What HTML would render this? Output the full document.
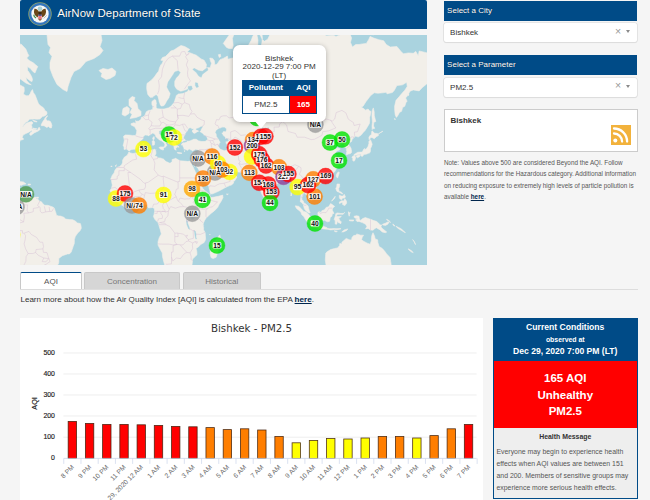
<!DOCTYPE html>
<html lang="en">
<head>
<meta charset="utf-8">
<title>AirNow Department of State</title>
<style>
*{box-sizing:border-box}
html,body{margin:0;padding:0}
body{width:650px;height:500px;overflow:hidden;background:#f5f5f5;font-family:"Liberation Sans",Arial,sans-serif;color:#333;position:relative}
.abs{position:absolute}
.blue{background:#004b87;color:#fff}
#hdr{left:20px;top:0;width:406.5px;height:28.5px;border-radius:2px 2px 0 0}
#hdr .t{left:37.3px;top:0;line-height:27.5px;font-size:11.5px;white-space:nowrap;text-shadow:0 0 1px rgba(0,0,0,.6)}
#map{left:20px;top:34.5px;width:406.5px;height:230px;background:#aad3df;overflow:hidden}
.bar{left:444.1px;width:193.2px;height:20px;font-size:8px;line-height:20.5px;padding-left:3px;text-shadow:0 0 1px rgba(0,0,0,.6)}
.sel{left:444.1px;width:193.2px;height:19.2px;background:#fff;border-radius:2px;box-shadow:0 0 0 0.6px #d8d8d8, 0 1px 1px rgba(0,0,0,.08);font-size:8px;line-height:19.5px;padding-left:6px;color:#333}
.sel .x{right:16.2px;top:-1.2px;color:#999;font-size:10.5px}
.sel .c{right:7.1px;top:7.5px;width:0;height:0;border-left:2.8px solid transparent;border-right:2.8px solid transparent;border-top:3px solid #8a8a8a}
#rss{left:444px;top:109px;width:193.5px;height:42.6px;background:#fff;border:1px solid #ccc}
#rss b{left:5.5px;top:5.5px;font-size:8px;color:#333}
#note{left:444px;top:157px;width:200px;font-size:6.33px;line-height:11.4px;color:#555;white-space:nowrap}
#note a,#learn a{color:#00264d;font-weight:700;text-decoration:underline}
.tab{top:271.5px;height:17.5px;background:#d6d6d6;border:1px solid #c8c8c8;border-bottom:none;border-radius:2px 2px 0 0;font-size:8.05px;line-height:17px;text-align:center;color:#777}
#tabline{left:20px;top:288.5px;width:618px;height:1px;background:#ddd}
#learn{left:20.4px;top:294.4px;font-size:8.08px;line-height:12px;white-space:nowrap;color:#333}
#chart{left:20px;top:318px;width:463px;height:182px;background:#fff}
#cc{left:492.5px;top:318px;width:145.5px;height:180.5px;border:1px solid #004b87;background:#eee}
#cc .c{left:0;width:100%;text-align:center;white-space:nowrap;font-weight:700}
</style>
</head>
<body>
<div id="hdr" class="abs blue">
<svg class="abs" style="left:8.25px;top:2.3px" width="24" height="24" viewBox="-12 -12 24 24">
<circle r="11.7" fill="#93a56a"/><circle r="10.9" fill="#3476bd"/><circle r="8.7" fill="#f8f8f6"/>
<circle cx="0" cy="-5.2" r="2.3" fill="#a9d2d6"/>
<path d="M-.6 -1.2 Q-2.6 -5.6 -5.6 -5.2 Q-6.6 -2 -5.4 .6 Q-4.2 2.6 -2.2 3.4 L-1.8 .8 Z M.6 -1.2 Q2.6 -5.6 5.6 -5.2 Q6.6 -2 5.4 .6 Q4.2 2.6 2.2 3.4 L1.8 .8 Z" fill="#6a4717"/>
<path d="M-1.4 -2.2 Q0 -3.4 1.4 -2.2 L1.8 1 L-1.8 1 Z" fill="#3b2a14"/>
<path d="M-2.4 4.4 L0 7 L2.4 4.4 Z" fill="#7a5a2a"/>
<path d="M-1.7 .7h3.4v3q0 1.4-1.7 1.8q-1.7-.4-1.7-1.8z" fill="#e8747c"/><rect x="-1.7" y=".7" width="3.4" height="1.1" fill="#2b4f95"/>
<path d="M-6.9 .8 Q-6.6 3.6 -4.2 4.6 L-3.6 3.4 Q-5.4 2.8 -5.6 .8 Z" fill="#3f8f4a"/>
<path d="M3.8 4.4 L6.6 1.4" stroke="#a9a9a9" stroke-width=".8" fill="none"/>
</svg>
<div class="t abs">AirNow Department of State</div>
</div>
<div id="map" class="abs">
<svg class="abs" style="left:0;top:0" width="406.5" height="230" viewBox="0 0 406.5 230">
<defs><filter id="sb" x="-2%" y="-2%" width="104%" height="104%"><feGaussianBlur stdDeviation="0.45"/></filter></defs>
<g filter="url(#sb)">
<rect x="-5" y="-5" width="420" height="240" fill="#aad3df"/>
<g stroke="#f2efe9" stroke-width="0.6" stroke-linejoin="round">
<polygon points="27.0,-0.5 28.0,9.5 30.5,12.5 29.0,17.5 32.0,21.5 30.0,27.5 30.0,33.5 33.0,41.5 37.0,49.5 43.0,54.5 47.0,56.5 48.0,51.5 51.0,42.5 54.0,36.5 60.0,33.5 66.0,26.5 74.0,23.5 80.0,19.5 83.0,15.5 80.0,11.5 82.0,5.5 81.0,-0.5" fill="#f2efe9"/>
<polygon points="79.0,35.5 83.0,33.5 88.0,34.5 92.0,33.0 96.0,36.5 95.0,40.5 90.0,43.5 86.0,44.5 81.0,41.5 82.0,38.5" fill="#f2efe9"/>
<polygon points="112.0,61.5 115.0,62.5 114.0,65.5 117.0,68.5 118.0,73.5 121.0,76.5 121.0,80.5 116.0,82.5 110.0,83.5 112.0,79.5 110.0,77.5 112.0,73.5 109.0,70.5 109.0,64.5" fill="#f2efe9"/>
<polygon points="103.0,73.5 107.0,71.5 109.4,73.5 109.0,78.5 105.0,81.1 102.0,79.5" fill="#f2efe9"/>
<polygon points="130.1,62.3 127.8,59.4 126.8,54.6 126.7,52.2 127.0,48.4 128.6,47.3 131.3,45.2 133.4,43.0 135.0,41.1 136.7,38.4 138.7,36.1 139.3,33.2 140.8,29.9 142.3,28.2 143.3,25.6 140.8,25.2 142.5,22.5 145.4,21.6 148.2,18.8 150.7,16.0 154.0,15.0 157.6,12.5 161.0,10.5 164.7,11.5 169.8,14.5 167.1,16.9 170.4,17.9 173.7,19.3 176.3,20.2 181.1,23.9 184.1,25.2 186.5,29.5 186.0,32.4 190.2,32.8 191.5,28.2 190.3,25.6 189.8,23.0 192.6,23.4 194.3,25.6 194.8,29.9 197.2,29.1 198.5,26.9 200.0,24.7 203.3,23.4 207.4,21.1 207.9,24.3 212.4,23.0 215.7,23.0 218.1,19.7 218.3,16.9 220.6,17.9 224.7,19.7 228.0,22.0 229.6,24.3 231.8,22.5 229.3,18.8 228.5,14.0 228.8,9.5 231.3,5.3 232.6,1.4 234.2,-0.9 237.5,-0.9 238.4,5.3 239.2,-0.9 242.0,-0.9 242.6,4.7 244.4,6.3 247.7,4.2 250.2,-0.9 304.5,-0.9 306.1,0.9 313.5,0.3 316.0,1.4 320.9,-0.3 323.4,-0.9 330.0,-0.9 331.6,3.1 330.5,7.4 332.4,12.0 335.7,9.5 339.0,9.5 342.3,8.9 346.4,8.4 348.9,4.2 350.1,1.4 353.8,3.1 358.8,4.7 363.7,5.8 366.2,9.5 370.3,12.0 376.9,11.5 381.0,16.4 383.4,18.8 388.4,17.9 393.3,18.3 395.8,16.4 398.2,20.7 399.2,16.0 403.2,16.9 407.3,17.9 407.3,48.4 402.4,52.5 399.1,55.9 393.3,54.9 390.0,56.2 387.6,60.7 385.6,62.9 387.1,66.2 385.9,67.7 384.8,71.2 382.6,72.4 381.6,76.3 379.5,77.4 377.7,80.8 376.4,82.4 375.2,80.0 374.7,75.4 374.6,71.2 376.0,65.3 379.3,61.6 381.8,58.5 384.8,55.2 387.2,51.5 386.7,47.3 382.6,49.8 381.0,50.1 376.9,50.5 374.4,55.2 372.4,57.5 367.0,58.8 366.2,57.2 362.9,57.8 357.9,58.2 354.2,57.8 350.5,60.7 345.9,66.8 343.1,71.2 341.2,72.1 344.3,74.0 345.3,75.2 348.1,74.0 349.4,75.7 351.0,76.5 350.5,79.5 349.7,82.2 349.7,86.0 349.4,88.5 346.9,92.7 345.1,95.5 342.8,97.9 341.2,100.1 338.2,102.0 335.7,101.1 334.1,102.4 333.1,103.3 332.1,104.6 331.6,106.4 329.0,108.1 328.2,109.6 329.7,111.1 331.0,113.2 331.6,116.2 331.3,117.9 329.8,118.7 328.3,119.1 326.5,119.7 326.4,118.1 326.9,116.2 326.2,114.8 327.0,113.4 325.5,112.7 324.1,111.9 324.6,110.4 324.2,109.2 323.1,108.3 320.9,109.0 318.8,110.4 318.1,109.2 319.6,107.0 318.0,106.2 315.3,108.3 312.7,109.8 312.4,111.1 314.2,112.7 314.4,114.0 316.0,113.6 317.5,112.7 320.1,113.8 319.8,114.8 316.8,116.0 314.8,118.5 316.3,120.1 317.5,122.8 319.1,124.8 319.1,126.5 317.6,127.3 319.3,128.4 318.6,130.5 317.3,132.2 315.7,135.1 314.4,137.1 313.0,138.4 310.9,140.2 308.6,141.6 306.5,142.4 305.3,142.7 302.8,143.4 300.5,144.1 300.4,145.7 299.4,145.7 299.1,143.9 297.1,143.4 295.6,144.1 294.1,145.4 292.8,146.8 292.5,148.7 293.8,150.6 295.6,152.3 296.8,153.2 297.9,155.4 298.4,157.9 298.4,160.3 297.1,161.6 294.9,162.8 294.1,164.0 292.1,165.1 291.0,165.8 291.2,163.8 290.5,162.8 288.9,162.5 288.0,161.0 286.9,159.8 285.2,158.9 284.6,157.8 283.6,157.6 283.1,158.8 282.8,160.5 281.8,162.6 281.9,164.6 283.3,166.0 283.9,168.0 285.6,168.8 286.9,169.8 288.2,171.3 288.7,173.7 289.4,175.9 290.2,177.7 288.9,177.9 286.7,176.4 285.2,175.1 284.1,173.1 283.6,170.8 283.1,169.3 281.9,167.8 280.3,166.8 280.6,163.8 281.0,160.6 280.1,156.7 279.2,152.5 277.8,151.6 276.8,152.6 275.5,153.7 273.7,153.3 273.9,150.8 272.7,147.6 271.3,146.1 269.9,143.9 269.4,142.2 267.6,142.2 265.8,143.2 263.7,143.2 261.7,143.9 261.4,145.7 259.7,146.8 258.3,147.8 255.8,150.4 254.0,152.0 252.2,153.3 250.5,154.7 250.4,157.1 250.7,158.4 250.0,160.5 250.0,163.0 248.6,164.3 247.2,165.3 246.1,166.6 245.1,166.0 243.9,163.5 243.1,161.1 241.6,158.6 240.8,155.9 239.8,153.7 239.0,151.3 238.4,148.2 238.2,145.5 238.0,143.4 237.4,144.7 235.4,145.2 233.8,144.7 232.1,142.5 233.8,141.3 231.3,140.6 229.6,139.5 228.8,137.9 228.0,136.8 224.9,137.1 221.1,137.3 218.3,137.0 215.3,136.6 212.9,136.0 212.0,133.8 211.2,135.1 211.4,137.5 212.4,139.3 215.0,140.0 217.0,142.0 215.7,144.1 214.8,145.7 213.7,146.1 213.5,148.2 211.5,149.9 209.6,150.6 207.4,151.6 204.5,153.0 199.5,155.7 196.7,157.1 192.6,158.8 190.2,158.9 189.7,160.5 191.0,162.6 194.3,162.1 198.4,161.3 202.7,160.1 203.0,162.6 201.3,166.0 199.2,169.3 197.6,172.6 194.3,175.9 191.0,178.4 188.5,180.8 186.0,183.3 184.7,185.3 183.7,187.4 182.8,189.9 183.6,192.4 183.6,194.9 185.1,197.5 185.4,200.7 185.6,204.6 184.1,207.5 180.3,209.8 178.6,211.8 176.0,213.4 176.8,216.2 177.0,219.8 174.5,222.1 172.6,224.1 172.4,227.1 171.9,230.4 144.9,230.4 143.6,226.2 142.5,221.6 142.3,218.0 140.3,214.5 138.0,210.1 138.0,206.7 139.3,202.4 141.3,199.0 140.3,194.9 138.8,190.1 138.0,187.6 135.0,184.6 133.4,181.6 134.1,179.2 134.7,176.2 134.4,173.7 132.7,172.4 130.4,172.8 128.5,172.9 126.8,170.4 125.5,169.6 122.7,169.5 120.6,169.9 118.6,170.8 115.3,172.1 112.8,171.6 110.4,171.4 106.3,172.8 103.8,171.4 100.8,169.5 98.0,167.6 96.7,166.0 96.7,164.3 94.4,162.1 93.1,160.8 91.1,159.4 91.0,157.6 90.0,155.5 91.5,153.3 92.3,149.9 91.8,147.8 91.5,145.0 90.6,144.3 92.3,140.2 94.1,137.9 94.9,135.3 96.9,132.5 99.7,131.4 101.8,129.6 102.6,127.3 102.6,125.2 104.5,122.0 107.1,120.5 108.2,118.5 108.9,116.9 109.4,116.4 108.2,115.2 106.4,114.0 104.0,114.4 104.1,111.7 103.0,110.7 103.8,108.1 104.3,105.3 103.5,101.3 105.4,99.9 109.1,100.1 112.3,100.4 115.6,100.6 116.5,98.1 116.8,95.5 115.6,93.6 114.7,91.7 111.4,90.2 110.9,88.8 113.7,87.8 116.0,88.3 115.6,85.5 116.6,86.3 118.8,86.0 121.1,84.2 121.2,82.4 122.7,81.9 124.4,81.1 125.2,79.5 126.3,76.8 128.5,75.4 130.4,75.2 132.7,74.3 132.9,71.5 131.9,69.5 131.9,66.5 134.2,64.7 136.0,63.2 133.4,62.3" fill="#f2efe9"/>
<polygon points="199.7,199.9 201.3,205.5 200.5,208.0 199.9,210.5 198.1,216.2 196.1,222.3 193.1,223.6 191.0,222.5 190.0,218.0 191.6,213.6 191.0,209.2 192.6,206.7 195.6,205.6 197.6,202.9" fill="#f2efe9"/>
<polygon points="250.0,164.0 251.5,165.1 253.2,167.6 253.0,169.5 251.2,170.3 250.2,169.6 249.7,166.8" fill="#f2efe9"/>
<polygon points="297.4,147.8 299.5,146.2 301.2,147.1 300.2,149.0 298.2,149.5" fill="#f2efe9"/>
<polygon points="318.5,137.0 319.3,137.5 318.5,140.2 317.5,143.1 316.3,141.5 316.3,139.7 317.6,137.5" fill="#f2efe9"/>
<polygon points="353.3,72.9 354.2,76.8 354.3,80.8 355.8,86.5 353.8,87.3 353.5,91.0 354.7,93.2 353.8,94.1 352.8,92.7 352.2,94.6 352.0,91.0 352.4,87.3 351.9,80.8 352.2,75.7" fill="#f2efe9"/>
<polygon points="352.0,95.8 354.7,98.3 357.6,98.5 358.4,100.6 356.3,101.7 354.3,103.7 351.9,102.4 350.5,102.8 349.2,104.8 348.9,102.6 349.7,100.8 351.5,99.5 351.7,96.9" fill="#f2efe9"/>
<polygon points="350.5,104.8 351.4,107.0 352.2,109.2 351.4,111.7 350.5,113.4 350.4,116.4 350.2,117.1 348.9,118.5 348.4,117.9 347.4,118.7 345.9,119.3 344.0,119.3 343.6,119.9 342.3,121.5 340.8,120.7 340.8,119.3 339.0,119.3 336.6,120.1 334.1,120.5 333.9,119.7 335.7,118.5 337.7,117.3 340.7,117.1 342.3,117.1 343.6,114.4 344.5,113.4 344.5,114.8 346.4,113.8 348.1,111.3 348.9,108.5 348.9,106.4 349.6,105.5" fill="#f2efe9"/>
<polygon points="336.6,120.7 339.4,119.7 340.2,120.9 339.4,121.8 337.4,122.8 336.4,122.0" fill="#f2efe9"/>
<polygon points="333.9,120.7 335.2,121.3 335.6,122.8 334.8,125.5 333.6,126.3 332.8,125.5 332.8,123.4 332.0,122.4 332.4,121.5" fill="#f2efe9"/>
<polygon points="317.0,149.0 319.6,149.0 319.6,151.6 318.6,153.5 319.0,156.4 320.9,156.9 322.7,158.4 322.4,159.1 320.3,157.9 318.6,157.1 317.0,156.4 316.5,155.4 315.8,153.2 316.7,152.0" fill="#f2efe9"/>
<polygon points="319.3,160.3 321.3,161.0 323.2,161.1 324.2,159.3 325.4,161.5 324.7,163.1 322.6,163.1 321.6,164.8 319.9,163.8 319.3,162.5" fill="#f2efe9"/>
<polygon points="324.9,163.8 326.4,166.0 326.7,168.1 324.9,170.6 322.6,169.6 322.7,167.8 321.4,167.6 319.5,168.6 319.3,167.1 321.8,165.8 323.7,166.0" fill="#f2efe9"/>
<polygon points="311.6,166.1 315.2,161.3 314.8,163.1 312.2,165.8" fill="#f2efe9"/>
<polygon points="275.4,170.8 279.0,171.4 281.0,173.6 283.8,176.4 285.9,177.0 288.7,179.2 290.3,181.6 291.2,183.8 293.1,184.9 292.6,189.6 290.7,189.6 288.0,187.4 286.1,185.6 283.8,181.6 281.6,179.5 281.0,177.2 279.0,175.4 276.5,173.4 275.4,171.4" fill="#f2efe9"/>
<polygon points="291.7,191.2 293.0,189.7 297.1,190.9 300.4,191.4 301.2,190.5 303.8,191.4 307.0,192.7 306.8,194.2 303.7,193.9 299.5,193.2 296.3,192.9 293.6,192.2" fill="#f2efe9"/>
<polygon points="307.1,193.4 309.4,193.7 311.1,193.7 314.4,193.5 316.0,193.7 320.6,193.5 320.9,194.0 316.8,194.7 314.4,194.5 310.7,194.9 308.8,194.5 307.1,194.2" fill="#f2efe9"/>
<polygon points="321.8,197.0 324.2,194.9 327.8,193.9 326.7,195.4 323.4,196.9" fill="#f2efe9"/>
<polygon points="314.4,195.7 317.3,196.4 316.0,197.0 314.4,196.2" fill="#f2efe9"/>
<polygon points="297.9,177.5 299.1,176.7 301.2,177.4 301.9,175.7 304.5,174.7 306.1,172.4 308.6,171.8 310.6,168.6 312.2,169.5 314.7,171.4 312.7,172.9 312.2,175.1 314.0,178.4 312.4,178.7 311.9,181.3 310.2,182.6 309.9,184.9 309.4,186.4 307.3,186.8 304.5,185.3 302.5,185.6 299.9,184.8 299.5,182.5 298.2,180.8 297.9,179.2" fill="#f2efe9"/>
<polygon points="315.7,178.7 317.3,177.9 320.8,178.5 323.4,178.4 324.6,177.4 323.1,179.3 320.9,179.2 317.5,179.3 316.2,181.3 318.5,181.5 321.4,181.3 319.8,182.8 318.5,183.1 319.8,185.4 321.3,186.9 320.6,188.9 319.6,187.9 318.6,187.9 317.5,185.8 316.7,189.2 315.2,189.1 315.2,185.8 314.2,184.4 315.2,181.5 315.7,180.0" fill="#f2efe9"/>
<polygon points="328.5,176.7 329.2,178.0 330.3,177.5 329.5,179.3 329.2,181.2 328.5,178.7" fill="#f2efe9"/>
<polygon points="329.2,184.9 333.8,184.9 333.3,186.1 329.5,185.8" fill="#f2efe9"/>
<polygon points="334.1,181.3 336.6,180.7 339.0,181.3 339.4,184.1 340.7,185.4 342.3,183.8 345.3,182.5 348.1,183.5 350.5,184.3 353.8,185.6 356.3,186.3 358.4,187.9 360.1,189.9 361.7,189.9 360.9,191.9 362.9,194.0 365.4,195.9 366.7,197.0 365.4,197.7 362.1,196.9 360.1,194.9 356.3,192.7 354.7,193.7 353.0,195.2 350.5,195.0 348.1,193.4 345.6,193.9 346.9,191.5 345.6,189.2 342.3,187.6 339.0,186.4 337.1,186.6 335.7,184.8 338.2,183.8 335.7,183.3 334.1,182.3" fill="#f2efe9"/>
<polygon points="362.6,189.2 365.4,188.2 367.8,186.9 369.1,187.1 367.8,189.2 365.4,190.4 362.7,189.9" fill="#f2efe9"/>
<polygon points="366.7,184.3 369.5,185.9 370.4,187.7 369.5,186.6 366.7,184.8" fill="#f2efe9"/>
<polygon points="372.9,188.9 375.1,191.0 373.9,190.9 372.8,189.2" fill="#f2efe9"/>
<polygon points="376.0,191.2 381.5,193.9 383.4,196.0 385.4,197.5 384.3,197.2 381.5,195.4 377.7,193.2" fill="#f2efe9"/>
<polygon points="392.7,204.6 393.8,206.0 395.5,209.6 394.6,207.2" fill="#f2efe9"/>
<polygon points="388.4,213.8 390.8,215.3 393.3,217.6 391.7,217.1 388.9,215.0" fill="#f2efe9"/>
<polygon points="306.1,230.4 305.3,225.2 305.5,221.6 305.8,218.0 307.1,216.8 310.6,214.6 314.4,213.6 317.6,212.9 319.6,210.5 319.8,208.4 321.9,209.1 321.9,207.2 324.2,205.3 326.2,203.4 328.8,204.5 330.0,205.0 331.6,204.8 332.0,202.4 333.6,200.6 336.6,200.1 336.7,198.9 340.7,200.2 343.6,200.2 342.3,202.1 341.5,204.8 344.0,206.5 347.3,208.2 350.1,209.2 351.4,205.8 351.5,202.4 351.9,200.2 353.0,197.7 354.5,201.1 355.2,203.9 357.6,204.8 357.9,207.5 359.1,211.5 361.7,213.1 364.0,215.3 366.7,218.9 370.0,222.5 370.6,226.2 371.1,228.9 371.1,230.4" fill="#f2efe9"/>
<polygon points="206.4,159.1 208.3,159.1 207.4,159.6" fill="#f2efe9"/>
<polygon points="271.1,157.6 271.6,160.1 270.9,161.0" fill="#f2efe9"/>
<polygon points="203.3,8.4 206.6,3.6 209.9,-0.9 214.0,-0.9 212.4,3.6 213.2,10.5 212.4,13.5 209.1,13.5 206.6,12.5 205.0,10.5" fill="#f2efe9"/>
<polygon points="198.4,19.7 200.4,19.3 200.8,21.6 199.2,22.5" fill="#f2efe9"/>
<polygon points="215.7,15.0 217.8,15.0 217.0,17.9" fill="#f2efe9"/>
<polygon points="233.8,-0.9 236.2,-0.9 235.7,0.9 234.1,0.9" fill="#f2efe9"/>
<polygon points="344.0,-0.9 354.7,-0.9 353.8,-0.3" fill="#f2efe9"/>
<polygon points="374.4,83.5 375.5,84.0 374.9,84.7" fill="#f2efe9"/>
<polygon points="357.9,99.5 359.3,98.3 362.9,96.2 360.4,97.6" fill="#f2efe9"/>
<polygon points="387.6,59.1 388.9,59.1 388.4,60.7" fill="#f2efe9"/>
<polygon points="90.8,131.2 92.1,131.1 91.5,132.0" fill="#f2efe9"/>
<polygon points="95.2,130.9 96.4,129.7 95.7,131.6" fill="#f2efe9"/>
<polygon points="183.1,189.6 183.6,190.2 183.2,190.5" fill="#f2efe9"/>
<polygon points="189.8,199.0 190.2,199.7 189.7,199.7" fill="#f2efe9"/>
<polygon points="-0.8,160.1 1.3,159.4 1.3,161.3 3.1,159.9 3.8,161.1 6.2,162.0 6.7,162.6 10.0,162.5 12.5,163.1 15.0,162.3 16.8,162.3 15.8,163.5 18.3,164.6 19.1,166.0 21.5,166.8 22.9,168.8 24.8,170.3 27.8,170.3 32.6,171.9 34.2,172.9 35.5,176.7 36.3,179.2 36.3,180.3 38.8,181.0 40.5,181.0 43.8,182.3 45.7,184.1 49.5,184.6 52.8,184.8 55.3,186.1 57.4,187.9 60.4,188.6 61.0,190.7 61.3,193.3 59.9,196.0 57.7,198.0 55.3,201.6 54.4,204.6 54.3,208.4 53.3,211.0 52.3,214.1 51.2,217.1 49.5,218.9 47.5,218.9 42.4,220.7 38.8,223.4 38.8,227.3 38.3,229.1 37.2,230.4 -0.8,230.4" fill="#f2efe9"/>
<polygon points="-0.8,146.6 3.4,146.9 6.1,148.9 3.4,149.4 1.0,150.4 -0.8,149.5" fill="#f2efe9"/>
<polygon points="8.1,149.0 10.7,149.2 10.2,150.0 8.1,149.9" fill="#f2efe9"/>
<polygon points="16.8,162.3 18.4,162.1 18.3,163.3 16.8,163.3" fill="#f2efe9"/>
<polygon points="-0.8,10.0 1.0,8.9 5.8,14.0 7.6,18.3 8.9,20.7 6.7,23.0 9.2,25.6 13.3,27.8 15.8,29.9 17.8,31.6 16.6,34.0 15.0,38.0 12.8,36.4 10.4,33.6 7.4,31.6 7.6,35.3 10.0,38.8 11.7,41.8 12.5,44.4 12.0,46.6 10.4,45.9 8.4,44.4 5.8,42.6 6.7,45.5 9.2,48.4 11.3,49.8 9.2,49.4 5.9,48.0 3.8,46.6 1.0,44.4 -0.8,43.3" fill="#f2efe9"/>
<polygon points="-0.8,49.4 1.0,50.5 4.1,52.2 4.3,55.9 3.4,59.1 4.6,59.8 6.1,60.7 8.4,60.7 10.0,59.1 11.2,56.2 12.5,54.6 13.3,57.5 15.0,59.8 16.1,62.6 17.4,65.9 18.3,68.3 19.6,70.1 21.2,71.2 23.2,72.6 24.3,74.0 24.8,75.4 26.8,76.8 27.0,79.0 25.2,80.8 22.4,81.6 19.9,84.0 16.9,84.2 14.1,84.0 9.4,84.2 7.6,86.5 5.9,87.3 3.9,89.5 2.3,92.2 1.5,92.7 3.0,91.7 4.3,90.0 5.9,88.5 8.4,87.3 11.7,86.6 13.0,87.8 12.0,89.5 10.0,89.5 11.7,90.5 12.0,92.0 11.7,93.4 13.3,94.3 15.0,95.1 16.8,94.8 18.3,96.0 14.1,97.9 12.5,99.2 10.9,100.4 9.7,99.5 10.0,98.1 12.0,96.5 11.8,95.3 10.0,96.5 8.4,97.4 5.9,98.5 3.1,100.1 2.1,102.6 3.4,103.6 3.4,104.4 1.1,105.1 -0.8,105.5" fill="#f2efe9"/>
<polygon points="17.4,95.5 18.3,93.2 19.2,92.2 20.2,94.3 19.1,95.5" fill="#f2efe9"/>
<polygon points="12.7,92.9 15.0,93.6 16.6,93.5 15.6,94.6 13.6,94.1" fill="#f2efe9"/>
<polygon points="12.5,85.0 16.6,86.3 17.1,87.0 14.1,86.5" fill="#f2efe9"/>
<polygon points="27.3,80.6 25.2,82.7 24.2,84.7 23.2,86.0 21.9,88.3 21.1,90.0 21.4,90.7 24.0,90.7 26.8,92.4 28.5,91.5 29.8,92.7 31.3,93.0 31.9,90.7 31.4,88.5 30.4,86.5 28.9,85.8 27.3,86.0 26.5,84.7 25.7,84.0 26.6,82.4 27.5,81.1" fill="#f2efe9"/>
<polygon points="-0.8,106.2 0.2,105.7 0.2,106.3 -0.8,106.6" fill="#f2efe9"/>
</g>
<g stroke="#aad3df" stroke-width="0.4" stroke-linejoin="round">
<polygon points="141.0,71.7 144.0,71.1 145.8,68.7 147.0,66.3 149.4,62.7 150.6,58.5 148.8,55.5 147.0,51.9 148.2,47.1 150.6,43.5 153.0,39.9 154.8,36.9 158.4,35.7 160.2,37.5 158.4,40.5 156.0,42.9 154.2,46.5 154.2,50.7 155.4,53.1 157.2,54.9 160.8,56.7 165.0,55.5 168.0,54.3 167.4,56.1 163.2,57.9 158.4,58.5 156.0,60.3 154.8,63.9 153.6,67.5 151.2,70.5 148.8,72.3 144.0,73.5 140.4,73.5 136.8,73.1 136.6,69.5 138.0,68.5" fill="#aad3df"/>
<polygon points="132.8,62.3 136.2,59.9 137.6,61.5 138.6,66.3 139.8,69.9 141.2,71.9 139.0,72.5 137.0,69.0 136.4,65.5 135.0,64.1" fill="#aad3df"/>
<polygon points="187.2,32.7 182.4,36.3 178.8,35.7 174.0,33.3 172.8,34.5 176.4,37.5 178.8,41.1 181.2,42.3 182.4,39.3 185.4,36.9 188.0,35.1" fill="#aad3df"/>
<polygon points="168.2,51.5 171.5,51.0 172.4,54.0 170.0,55.5 168.2,54.0" fill="#aad3df"/>
<polygon points="175.4,47.7 177.5,48.0 178.4,52.0 176.5,52.5 175.4,50.5" fill="#aad3df"/>
<polygon points="109.2,116.6 109.7,116.1 111.4,115.0 114.7,114.8 115.3,114.9 117.1,113.2 118.9,110.7 118.1,109.2 119.9,106.6 122.2,105.1 124.0,103.1 123.5,102.0 125.0,100.4 127.5,100.8 128.5,101.3 130.6,99.9 133.2,98.3 141.3,95.3 141.5,97.4 142.3,96.2 143.6,99.0 145.6,100.4 148.4,102.4 150.0,103.5 150.7,105.3 150.5,107.2 151.8,109.2 152.8,110.4 153.6,111.7 153.6,113.0 154.3,114.8 155.6,115.6 156.8,115.6 156.1,113.4 157.6,112.5 158.1,113.1 157.4,111.1 156.4,109.6 156.3,107.0 157.8,108.2 158.7,106.2 161.2,106.4 161.7,108.0 161.7,109.2 162.7,111.5 163.3,112.7 163.7,114.4 165.2,114.8 166.5,115.2 167.3,116.0 169.1,114.6 171.2,115.4 172.6,116.4 175.5,114.8 178.1,115.2 177.5,117.5 177.0,120.7 176.2,122.8 175.2,125.4 171.7,125.7 170.9,125.4 167.8,125.9 163.3,125.5 160.1,125.2 158.1,124.2 155.8,122.8 151.7,124.2 151.5,126.7 149.9,127.7 145.9,125.9 143.4,123.6 140.3,122.6 138.5,122.6 136.7,121.1 135.2,120.7 136.4,119.1 136.4,116.9 136.0,115.6 136.7,114.2 135.5,114.6 134.9,113.8 131.4,114.6 127.0,114.8 123.7,114.8 118.8,116.7 117.6,117.1 113.8,117.9 112.2,118.1 109.9,117.3 109.7,116.7" fill="#aad3df"/>
<polygon points="161.7,108.0 162.7,107.0 163.8,106.2 166.1,105.8 167.1,106.5 164.7,107.2 163.0,107.3 162.0,107.7" fill="#aad3df"/>
<polygon points="166.3,105.5 164.7,104.0 163.8,102.6 164.5,101.1 165.6,99.7 165.8,98.1 167.5,96.5 168.3,94.8 169.1,93.4 171.1,93.2 171.2,94.3 173.9,94.3 172.1,96.0 173.5,97.9 174.9,98.3 176.8,96.9 178.6,96.2 176.2,95.1 176.2,93.9 179.1,92.9 180.5,92.0 182.6,91.7 181.6,92.9 180.9,94.6 180.1,96.2 179.1,96.7 180.8,97.6 182.9,99.0 183.9,100.4 186.0,101.5 187.0,103.3 187.0,104.6 185.2,105.9 183.9,105.9 181.1,106.0 178.3,105.3 176.3,103.7 173.7,103.7 170.9,105.1 168.8,105.7" fill="#aad3df"/>
<polygon points="196.4,95.5 198.4,94.1 200.0,93.4 202.5,92.4 205.0,92.7 206.1,93.9 205.8,96.2 203.3,96.0 202.5,97.6 201.3,98.1 202.3,99.2 203.0,100.8 205.0,102.2 205.0,104.2 207.1,103.5 208.6,105.3 207.1,106.2 205.6,106.2 205.5,108.1 206.6,109.6 207.3,112.3 207.3,114.6 204.1,115.2 201.7,114.2 200.0,113.4 199.0,111.5 199.5,109.6 200.0,107.7 201.3,107.5 200.0,106.6 198.9,104.2 196.9,101.5 196.7,99.2 195.6,97.6" fill="#aad3df"/>
<polygon points="171.9,128.2 172.4,130.1 173.9,132.4 174.2,133.5 175.4,135.7 176.0,137.3 177.2,139.5 177.2,141.1 179.3,142.9 179.8,145.5 180.0,148.2 181.9,149.9 183.1,153.3 184.4,154.7 186.4,156.2 188.5,158.1 189.7,159.6 190.3,159.1 189.7,157.9 189.2,155.4 188.7,153.3 188.2,151.3 186.2,148.0 184.4,145.9 182.9,143.8 182.6,141.5 181.1,139.1 179.6,137.1 178.5,135.3 177.2,133.1 175.8,132.0 176.2,129.2 175.7,130.1 175.0,132.4 173.9,131.1 172.9,129.7 172.4,128.2" fill="#aad3df"/>
<polygon points="197.6,129.4 197.4,128.2 199.0,127.5 200.2,128.2 201.2,128.2 202.2,130.3 203.3,132.2 205.1,133.1 207.1,134.4 208.9,134.8 211.2,133.5 212.4,134.0 211.7,134.9 211.2,135.1 210.9,135.7 210.7,136.2 209.6,137.0 208.1,138.6 205.8,139.1 203.8,139.3 203.5,138.6 203.5,137.0 203.3,135.7 202.8,135.4 202.2,136.6 202.2,138.0 201.3,136.8 201.0,134.9 200.2,133.8 199.0,132.4 198.4,131.2" fill="#aad3df"/>
<polygon points="239.5,94.8 242.0,92.7 245.3,93.4 248.6,92.7 248.9,93.6 246.1,94.1 242.8,93.9 240.7,96.5 239.5,96.2" fill="#aad3df"/>
<polygon points="289.2,80.6 291.3,79.5 294.6,76.0 297.9,71.2 299.2,68.9 298.7,72.6 296.3,76.8 293.0,80.0 290.5,81.1" fill="#aad3df"/>
<polygon points="170.9,179.7 172.9,179.3 174.5,179.8 174.7,181.6 173.7,183.8 172.6,184.3 170.9,183.9 170.7,181.6" fill="#aad3df"/>
<polygon points="166.5,185.6 167.3,185.8 167.6,188.2 169.3,192.4 169.4,194.4 168.6,193.7 167.0,189.9 166.6,187.4" fill="#aad3df"/>
<polygon points="174.4,195.7 175.2,196.0 176.0,199.0 176.0,202.4 176.7,203.8 175.7,203.8 175.0,200.7 174.7,197.9" fill="#aad3df"/>
<polygon points="237.5,-0.9 238.4,5.3 238.2,11.5 237.7,18.8 239.5,23.0 238.4,27.8 236.7,32.0 237.5,33.2 239.7,28.2 241.0,23.9 239.7,18.8 240.7,11.5 241.8,4.7 239.2,-0.9" fill="#aad3df"/>
<polygon points="0.8,162.0 1.8,163.5 1.3,164.8 0.2,164.3 0.3,162.6" fill="#aad3df"/>
</g>
<g stroke="#f2efe9" stroke-width="0.6" stroke-linejoin="round">
<polygon points="133.2,98.2 134.7,99.0 135.5,100.4 135.9,101.7 137.0,102.8 138.0,103.5 139.3,104.9 141.0,105.4 142.0,106.4 142.9,106.8 144.3,108.0 144.9,109.6 144.4,112.3 145.1,112.5 145.9,111.5 146.9,110.2 145.9,108.7 146.4,107.2 146.9,107.0 148.2,108.3 148.9,108.5 149.0,107.9 148.2,106.7 146.4,105.7 144.9,104.8 145.2,104.0 143.8,103.8 142.0,102.6 140.8,100.1 139.3,99.0 138.8,98.1 139.2,97.2 138.8,96.0 140.3,95.2 141.4,95.3 141.6,92.7 132.6,92.7" fill="#f2efe9"/>
<polygon points="139.1,112.5 140.5,111.9 143.3,112.0 144.3,111.7 143.4,113.8 143.4,115.0 142.3,114.8 140.0,113.7" fill="#f2efe9"/>
<polygon points="132.1,106.2 133.7,105.4 134.7,107.0 134.4,109.8 133.4,110.2 132.4,110.2 132.4,108.1" fill="#f2efe9"/>
<polygon points="132.7,102.8 134.1,101.5 134.3,103.3 133.7,105.1 132.9,104.4" fill="#f2efe9"/>
<polygon points="157.3,117.5 158.9,117.5 161.9,118.0 161.7,118.4 159.2,118.6 157.3,118.0" fill="#f2efe9"/>
<polygon points="171.7,118.5 172.9,117.8 175.5,117.1 174.5,118.5 172.9,119.3" fill="#f2efe9"/>
<polygon points="122.5,109.0 123.9,108.3 124.2,109.2 123.5,109.6" fill="#f2efe9"/>
<polygon points="156.4,110.4 158.4,111.3 159.1,112.3 158.1,111.9" fill="#f2efe9"/>
<polygon points="164.3,115.8 165.0,115.6 164.5,116.7" fill="#f2efe9"/>
<polygon points="161.2,109.6 162.2,109.6 161.9,110.2" fill="#f2efe9"/>
<polygon points="172.1,96.0 173.9,94.2 176.2,95.1 178.6,96.1 176.8,96.9 174.9,98.3 173.5,98.1" fill="#f2efe9"/>
<polygon points="202.2,138.0 202.2,136.6 202.8,135.4 203.4,135.9 203.5,137.5 203.2,138.4" fill="#f2efe9"/>
</g>
<g fill="none" stroke="#c9a9cc" stroke-width="0.45" opacity=".7" stroke-linejoin="round">
<polyline points="137.5,59.1 138.8,55.9 139.3,50.8 138.5,45.5 141.5,41.8 142.5,34.0 144.9,27.8 148.2,23.4 152.3,21.1 159.7,21.1 161.4,16.9 164.7,16.4 166.3,20.2 169.3,18.3"/>
<polyline points="158.2,34.9 157.6,29.9 157.3,25.6 152.3,21.1"/>
<polyline points="164.3,54.2 167.9,49.1 170.4,45.9 167.9,41.8 167.5,38.0 168.1,34.0 166.3,29.9 167.9,25.6 165.5,21.6 169.3,18.3"/>
<polyline points="164.7,57.5 163.8,62.3 164.7,67.7 169.3,69.5 170.4,74.0 172.1,76.3 170.4,79.0 174.5,78.7 177.0,82.2 181.1,84.7 184.4,85.8 184.1,89.8 181.6,91.7"/>
<polyline points="158.6,62.6 161.4,63.2 163.8,63.5"/>
<polyline points="153.1,68.0 158.1,67.4 162.2,69.2 164.7,67.7"/>
<polyline points="153.1,70.3 156.1,72.9 157.3,74.0 160.5,73.5 162.2,69.2"/>
<polyline points="142.0,74.3 142.8,79.5 143.3,82.2 145.7,84.0 149.5,86.0 155.6,87.0 158.1,83.5 157.3,78.2 157.3,74.0"/>
<polyline points="150.8,72.9 156.1,72.9"/>
<polyline points="130.1,76.0 128.5,80.0 128.6,84.5 132.1,87.3 131.1,90.7 134.4,91.0 140.0,91.0 141.3,88.0 138.7,84.0 143.3,82.2"/>
<polyline points="122.9,81.9 125.5,84.7 128.6,84.5"/>
<polyline points="124.2,81.1 128.5,80.0"/>
<polyline points="131.1,90.7 128.6,93.9 130.1,94.8 130.1,98.8 130.9,99.7"/>
<polyline points="130.1,94.8 135.7,93.2 141.1,93.4 144.9,92.7 146.7,89.8 143.3,87.3 141.3,88.0"/>
<polyline points="115.6,100.8 119.8,102.2 123.9,102.8"/>
<polyline points="104.1,104.0 107.9,104.0 107.2,108.1 106.3,112.3 106.4,114.0"/>
<polyline points="134.1,71.8 132.9,71.5"/>
<polyline points="146.7,89.8 149.5,90.2 155.1,88.8 155.6,87.0"/>
<polyline points="144.9,92.7 145.7,93.6 149.7,94.8 152.0,94.3 155.1,89.8 159.6,90.5 162.4,89.3 165.0,95.8 167.5,96.5"/>
<polyline points="141.1,95.5 143.8,95.8 145.7,93.6"/>
<polyline points="149.7,94.8 149.9,97.2 144.9,96.5 144.6,99.2 147.6,101.7 149.0,102.6"/>
<polyline points="149.9,97.2 150.5,100.4 152.0,102.0 155.4,103.1 155.4,98.8 155.9,98.1 159.7,99.9 165.6,99.9"/>
<polyline points="151.5,108.7 153.1,106.2 155.4,103.1"/>
<polyline points="153.1,106.2 156.4,105.3 161.9,104.4 164.7,103.7"/>
<polyline points="161.4,106.4 161.9,104.4"/>
<polyline points="150.5,104.0 152.3,104.0 152.5,105.9"/>
<polyline points="157.3,79.5 158.1,83.5"/>
<polyline points="157.3,80.6 163.0,80.3 168.8,81.4 170.4,79.0"/>
<polyline points="162.4,89.3 164.7,89.0 167.9,93.6"/>
<polyline points="184.4,100.6 190.2,102.4 195.1,104.0 198.4,104.0"/>
<polyline points="187.0,104.8 190.2,105.7 192.6,105.5 195.1,104.0"/>
<polyline points="190.2,105.7 190.5,107.9 192.3,108.7 195.1,110.4 197.6,109.0 199.0,111.5"/>
<polyline points="192.6,105.5 193.4,106.8 195.1,110.4"/>
<polyline points="177.8,116.4 179.0,114.8 181.1,114.6 184.4,114.8 188.2,114.0 192.3,114.0 191.0,109.4 192.3,108.7"/>
<polyline points="188.2,114.0 186.0,115.4 186.4,118.9 182.4,121.7 177.8,123.4 177.2,121.8 178.5,119.5 177.8,116.4"/>
<polyline points="177.2,121.8 176.3,122.2"/>
<polyline points="175.0,125.7 176.0,129.2"/>
<polyline points="177.0,123.4 177.0,125.4 176.2,129.0"/>
<polyline points="182.4,121.7 183.1,124.0 179.5,125.4 181.1,127.3 180.3,128.2 177.8,129.7 176.2,129.2"/>
<polyline points="183.1,124.0 185.1,124.6 187.7,126.1 192.1,129.7 195.1,129.9 196.6,130.1 198.2,131.1"/>
<polyline points="195.1,129.9 197.1,128.2 197.6,128.2"/>
<polyline points="192.3,114.0 193.3,116.4 194.3,118.3 193.3,120.5 194.6,122.4 197.1,124.4 197.1,126.3 197.6,128.2"/>
<polyline points="203.5,138.2 205.1,141.3 209.4,141.6 210.2,146.4 204.1,148.2 199.4,148.9 197.9,149.5 194.8,151.3 190.0,150.8 189.0,152.6"/>
<polyline points="209.4,141.6 210.2,139.3 210.9,138.0 211.4,136.4"/>
<polyline points="204.1,148.2 205.9,152.1"/>
<polyline points="199.0,111.5 197.6,109.0"/>
<polyline points="207.3,113.8 210.7,112.1 214.0,113.0 217.3,115.2 219.3,115.2 219.3,117.3 218.3,120.5 218.8,125.4 220.3,126.3 218.8,128.6 221.9,133.5 222.6,134.6 219.9,137.1"/>
<polyline points="218.8,128.6 221.4,129.4 227.7,128.4 228.3,125.9 232.6,124.6 232.9,122.2 234.2,121.7 235.6,120.3 236.4,115.6 240.0,114.6 241.8,114.0"/>
<polyline points="219.3,117.3 224.7,115.8 228.0,113.6 230.5,114.4 232.9,113.2 236.2,112.5 236.4,115.0 241.8,114.0"/>
<polyline points="204.8,104.2 208.9,103.7 210.7,105.3 212.4,105.3 215.0,102.0 217.3,103.3 220.4,105.3 224.7,110.4 228.0,113.6"/>
<polyline points="210.7,105.3 210.7,96.9 215.0,95.5 218.9,98.3 220.6,100.4 225.5,99.9 227.3,101.5 227.2,103.7 230.5,106.4 234.6,103.7 235.4,103.1 239.5,102.8 241.5,101.1 247.7,101.7 250.5,103.7"/>
<polyline points="230.5,106.4 232.6,107.7 234.7,107.7 236.7,104.8 238.8,106.4 240.0,108.5 236.2,109.0 234.7,107.7"/>
<polyline points="240.0,108.5 239.8,109.4 241.8,114.0"/>
<polyline points="236.2,109.0 232.6,107.7 231.1,111.9 230.1,114.0"/>
<polyline points="195.1,88.8 196.6,84.5 198.9,85.0 200.7,81.6 203.2,80.8 206.4,80.8 209.1,82.9 215.0,82.2 219.9,82.9 217.3,79.5 218.9,74.3 226.3,72.4 232.1,70.1 235.4,71.2 235.7,73.5 239.5,74.0 244.9,72.9 246.7,76.0 250.2,82.4 255.6,82.2 258.9,85.8 262.2,86.8"/>
<polyline points="195.1,88.8 196.1,90.2 197.9,90.5 199.2,93.6"/>
<polyline points="250.5,103.7 250.5,97.4 254.3,96.5 254.0,92.2 259.2,92.0 259.7,88.8 262.2,86.8"/>
<polyline points="262.2,86.8 266.2,85.0 269.9,82.7 274.2,84.7 280.3,83.5 279.8,79.5 286.7,81.4 286.9,83.2 294.1,84.0 299.5,86.8 306.6,84.0 310.6,85.3 315.8,92.9 308.9,95.8 302.7,96.7 301.9,100.4 294.6,104.2 291.2,104.6 284.6,102.2 277.2,102.2 275.5,98.5 268.1,96.5 266.6,90.0 263.0,86.8"/>
<polyline points="310.6,85.3 312.4,86.0 314.7,84.0 316.2,77.6 321.9,75.4 325.9,77.9 328.3,84.2 333.4,87.5 334.1,90.5 340.2,89.0 337.5,96.7 334.4,97.2 334.6,100.6 333.4,102.8"/>
<polyline points="333.4,102.8 332.3,101.5 329.2,103.7 327.4,104.2 323.2,108.1"/>
<polyline points="327.0,112.7 329.8,111.1"/>
<polyline points="230.8,140.0 233.8,139.0 235.4,138.6 233.9,135.7 233.1,133.5 234.9,132.0 238.5,130.1 241.3,126.3 241.2,123.0 242.6,123.8 240.3,122.0 240.0,119.7 243.3,119.5 246.6,117.5 243.6,116.4 241.8,114.0"/>
<polyline points="246.6,117.5 248.6,119.9 248.2,125.7 251.8,127.8 253.3,127.5 256.9,130.3 260.1,132.0 263.5,132.2 264.7,133.3 265.0,131.4 269.4,132.4 270.1,134.0 269.3,132.4 274.9,129.7 278.7,131.4"/>
<polyline points="250.4,130.5 253.3,132.2 257.8,133.3 263.5,134.9 263.5,132.2"/>
<polyline points="264.7,133.3 264.8,134.4 270.1,134.0"/>
<polyline points="263.5,134.9 264.5,136.8 263.5,137.7 264.8,140.7 265.0,143.1"/>
<polyline points="264.5,136.8 266.3,135.7 266.3,137.0 270.6,137.5 268.6,139.1 269.3,141.1 270.4,139.9 270.9,143.8 270.4,145.0"/>
<polyline points="270.9,143.8 271.9,141.1 273.6,139.3 274.4,136.6 278.7,131.4 281.0,132.7 281.0,136.0 279.2,139.3 281.3,140.7 282.4,142.7 284.9,143.8 283.3,145.9 279.8,146.8 278.8,149.0 281.0,152.8 280.1,154.7 281.8,157.2 282.4,160.5 281.0,163.1"/>
<polyline points="284.9,143.8 286.6,142.2 288.9,141.8 291.8,140.6 294.1,141.5 294.1,142.9 296.3,143.8"/>
<polyline points="286.6,142.2 287.9,143.6 289.7,144.8 289.7,146.9 291.7,148.7 294.0,151.8 295.6,154.9 295.4,155.5"/>
<polyline points="283.3,145.9 285.1,147.1 285.1,150.4 286.6,149.5 289.7,149.4 291.0,152.5 292.3,154.0 291.7,156.2 295.4,155.5"/>
<polyline points="291.7,156.2 288.0,156.2 287.0,157.4 287.9,160.6"/>
<polyline points="295.4,155.5 295.4,159.4 293.0,161.8 290.5,162.8"/>
<polyline points="283.3,169.3 284.9,170.6 286.6,169.8"/>
<polyline points="298.9,176.9 300.4,178.5 302.8,177.5 306.0,177.7 307.8,175.2 308.8,173.1 312.1,173.1"/>
<polyline points="350.5,184.3 350.5,195.0"/>
<polyline points="104.3,132.5 104.3,130.7 112.7,125.0 116.6,124.2 115.6,118.9 115.0,118.3"/>
<polyline points="96.9,132.5 104.3,132.5"/>
<polyline points="90.5,144.7 97.2,144.1 97.2,141.1 98.9,140.2 98.9,135.7 104.3,135.7 104.3,133.3"/>
<polyline points="104.3,133.3 110.7,137.5 107.9,137.5 109.6,152.5 109.4,154.2 100.7,154.9 99.7,154.0 98.5,155.4 95.1,152.3 91.5,153.2"/>
<polyline points="110.7,137.5 120.6,144.5 124.0,148.2 125.5,148.0 128.1,147.3 138.3,140.2 134.2,134.9 134.9,128.2 133.4,124.4 130.9,120.7 132.3,116.4 132.7,114.6"/>
<polyline points="133.4,124.4 137.5,123.6 137.5,122.0"/>
<polyline points="138.3,140.2 142.0,141.8 143.3,141.1 158.1,147.3 158.1,146.4 159.7,146.4 159.7,125.2"/>
<polyline points="159.7,142.9 170.1,142.9 179.3,142.9"/>
<polyline points="175.0,125.7 176.0,129.2"/>
<polyline points="158.1,147.3 158.1,153.8 156.3,154.2 155.3,158.4 154.5,158.9 156.3,161.8 157.6,165.6 158.4,166.3 160.1,163.0 164.5,164.1 167.1,163.8 169.3,164.0 171.9,160.6 173.2,159.8 172.9,163.5 174.7,165.8 172.9,167.1 176.7,171.1 174.5,173.1 169.4,174.2 167.5,172.4 163.7,171.6 160.2,167.5 158.4,166.3"/>
<polyline points="173.2,159.8 174.7,161.8 176.3,160.5 178.0,158.9 178.6,156.2 180.9,155.2 182.8,155.7 185.7,156.6 188.3,159.3 189.5,158.9"/>
<polyline points="178.6,156.2 178.5,154.9 179.5,151.4 182.1,149.9"/>
<polyline points="188.3,159.3 187.4,161.8 189.2,162.0 189.8,161.0"/>
<polyline points="189.2,162.0 189.3,164.3 191.0,165.3 195.9,166.8 197.6,166.8 192.6,171.8 189.5,172.3 187.5,173.6 186.0,175.4 186.0,181.5 187.0,182.8"/>
<polyline points="187.5,173.6 183.6,174.4 181.3,174.1 177.8,172.8 176.7,171.1"/>
<polyline points="174.5,173.1 176.2,176.9 174.5,180.0 174.4,181.6 180.5,184.9 180.6,185.8 183.1,187.7"/>
<polyline points="174.4,181.6 168.8,181.6 167.3,182.3 166.6,180.8 170.1,176.4 169.4,174.2"/>
<polyline points="168.8,181.6 169.3,183.8 168.8,186.1 167.0,187.2"/>
<polyline points="167.3,182.3 166.5,184.3 167.0,187.2"/>
<polyline points="169.3,193.5 172.7,195.5 174.5,195.7"/>
<polyline points="176.0,199.2 180.3,199.4 185.1,197.4"/>
<polyline points="174.5,195.7 173.2,195.9 173.4,203.3 168.3,204.6 168.6,206.0 172.6,207.9 175.2,206.7 177.5,206.8 176.7,208.6 175.0,206.3"/>
<polyline points="168.3,204.6 165.8,201.6 166.3,202.2 167.6,200.2 165.3,200.7 163.3,199.2 160.2,198.5 158.7,198.4 157.9,198.0 158.1,201.6 154.8,201.6 154.8,207.0 157.1,209.4 160.2,209.8 163.0,209.9 166.1,206.5 168.6,206.0"/>
<polyline points="160.2,209.8 161.7,211.8 164.2,214.5 167.0,217.5 170.1,217.8 171.2,221.6 171.1,224.3 172.7,226.0"/>
<polyline points="170.1,217.8 172.7,213.6 172.4,210.1 172.9,207.9"/>
<polyline points="167.0,217.5 165.2,218.2 163.0,220.0 160.5,223.6 156.4,223.0 152.8,226.0 151.5,222.1 151.5,217.1 153.1,217.1 153.1,210.6 157.1,209.4"/>
<polyline points="151.5,222.1 151.5,228.8 147.2,229.3 145.7,229.1"/>
<polyline points="138.0,208.9 141.6,209.1 149.0,209.1 153.1,209.9 157.1,209.4"/>
<polyline points="154.8,201.6 154.8,198.2 157.9,198.0"/>
<polyline points="154.8,198.2 149.9,191.5 145.9,189.7 140.0,189.7 138.7,189.6"/>
<polyline points="145.9,189.7 144.9,188.1 142.3,188.1 140.1,187.6 138.3,188.2"/>
<polyline points="140.1,187.6 142.3,187.1 144.8,186.4 145.2,183.6 147.9,181.0 148.4,176.2 149.2,174.2 150.7,171.6 155.4,173.2 159.7,171.8 163.7,171.6"/>
<polyline points="136.9,186.4 138.2,185.6 138.3,183.9 142.3,183.3 142.5,180.8 140.5,177.9 142.0,176.4 145.2,176.4 145.1,177.2 148.4,176.2"/>
<polyline points="134.7,178.4 137.2,178.4 137.2,176.4 140.5,176.4"/>
<polyline points="134.7,176.2 140.5,176.4 145.2,176.4"/>
<polyline points="145.2,176.4 144.9,175.2 143.3,173.6 142.5,170.3 144.1,167.6 141.3,164.1 144.4,163.5 143.1,160.1 142.5,158.6 141.0,157.2 141.8,158.3"/>
<polyline points="149.2,174.2 146.2,167.6 144.1,167.6"/>
<polyline points="144.1,167.6 149.9,165.1 154.5,162.5 156.3,161.8"/>
<polyline points="132.6,172.1 133.7,169.1 136.7,169.0 138.0,168.5 141.3,161.8 142.5,158.6"/>
<polyline points="141.0,157.2 140.8,155.9 144.1,151.8 143.3,144.7 143.3,141.1"/>
<polyline points="141.0,157.2 139.2,158.3 135.0,158.1 130.1,158.4 125.3,157.6 124.5,160.6 123.0,167.1 123.0,169.5"/>
<polyline points="125.5,148.0 125.5,151.8 124.5,154.2 118.9,155.0 120.2,157.8 122.2,159.1 124.5,160.6"/>
<polyline points="118.9,155.0 115.3,156.4 111.5,158.1 109.9,160.5 109.6,162.8 114.0,164.1 114.2,161.8 118.4,161.6 120.1,161.8 122.2,159.1"/>
<polyline points="120.1,161.8 121.2,165.1 121.2,169.8"/>
<polyline points="118.4,161.6 119.4,166.0 120.6,169.9"/>
<polyline points="114.0,164.1 114.2,167.0 113.3,171.6"/>
<polyline points="109.6,162.8 108.4,162.3 105.4,163.1 104.9,167.5 106.3,170.4 106.3,172.8"/>
<polyline points="104.9,167.5 103.1,167.8 103.1,166.1 101.7,166.0 99.7,168.6"/>
<polyline points="101.7,166.0 100.2,163.5 96.7,165.1"/>
<polyline points="105.4,163.1 104.9,161.1 103.3,159.4 99.8,159.4 99.7,159.4 96.1,158.9 93.9,162.0"/>
<polyline points="96.1,158.9 91.1,159.4"/>
<polyline points="91.0,158.3 93.8,157.4 95.9,157.8 93.8,157.1 91.0,157.4"/>
<polyline points="98.5,155.4 99.8,159.4"/>
<polyline points="-0.7,161.5 -1.3,165.0 0.2,168.5 4.4,169.9 7.6,169.8 7.1,175.4 8.5,178.0 3.8,178.2 4.4,181.8 3.6,186.9 -1.3,183.9"/>
<polyline points="8.5,178.0 13.3,176.7 13.3,173.4 18.3,172.6 18.7,171.4 17.6,170.3 19.9,166.0"/>
<polyline points="18.7,171.4 20.2,172.6 20.2,176.2 21.9,178.0 25.7,176.9 29.8,176.4 31.9,176.4 33.6,173.4"/>
<polyline points="25.7,176.9 24.3,171.3"/>
<polyline points="29.8,176.4 29.1,171.8"/>
<polyline points="3.6,186.9 -1.3,188.2 -3.0,192.0 -1.3,195.5 2.5,195.7 2.5,198.2 4.1,198.2 5.6,200.7 5.1,205.0 4.1,208.9"/>
<polyline points="4.1,198.2 9.0,196.4 11.2,199.4 16.6,202.4 19.9,207.2 22.7,207.2 23.5,211.8 22.9,213.9 16.1,214.5 15.6,217.5 12.8,218.5 8.1,218.5 5.6,213.8 4.1,208.9"/>
<polyline points="22.9,213.9 23.4,217.3 27.0,217.6 28.8,223.6 23.8,223.0 22.2,226.5 25.8,226.9 28.8,223.6"/>
<polyline points="15.6,217.5 18.3,220.3 23.8,223.0"/>
<polyline points="28.8,223.6 30.1,226.5 26.8,228.8 23.8,230.4"/>
<polyline points="8.1,218.5 6.1,221.6 5.9,226.2 3.8,230.4"/>
</g>
</g>
<g font-family="Liberation Sans,Arial,sans-serif" font-weight="700" font-size="6.7" text-anchor="middle">
<circle cx="237.0" cy="83.0" r="8" fill="#00e400" fill-opacity=".8" stroke="#00e400" stroke-opacity=".4" stroke-width="0.9"/>
<circle cx="-3.4" cy="171.9" r="8" fill="#9a9a9a" fill-opacity=".8" stroke="#9a9a9a" stroke-opacity=".4" stroke-width="0.9"/>
<circle cx="6.0" cy="159.3" r="8" fill="#4c9a4c" fill-opacity=".8" stroke="#4c9a4c" stroke-opacity=".4" stroke-width="0.9"/>
<circle cx="-7.8" cy="199.7" r="8" fill="#ffff00" fill-opacity=".8" stroke="#ffff00" stroke-opacity=".4" stroke-width="0.9"/>
<circle cx="96.0" cy="163.5" r="8" fill="#ffff00" fill-opacity=".8" stroke="#ffff00" stroke-opacity=".4" stroke-width="0.9"/>
<circle cx="105.0" cy="158.5" r="8" fill="#ff0000" fill-opacity=".8" stroke="#ff0000" stroke-opacity=".4" stroke-width="0.9"/>
<circle cx="112.0" cy="170.5" r="8" fill="#9a9a9a" fill-opacity=".8" stroke="#9a9a9a" stroke-opacity=".4" stroke-width="0.9"/>
<circle cx="119.0" cy="170.5" r="8" fill="#ff7e00" fill-opacity=".8" stroke="#ff7e00" stroke-opacity=".4" stroke-width="0.9"/>
<circle cx="123.4" cy="114.1" r="8" fill="#ffff00" fill-opacity=".8" stroke="#ffff00" stroke-opacity=".4" stroke-width="0.9"/>
<circle cx="149.0" cy="99.5" r="8" fill="#00e400" fill-opacity=".8" stroke="#00e400" stroke-opacity=".4" stroke-width="0.9"/>
<circle cx="154.0" cy="102.5" r="8" fill="#ffff00" fill-opacity=".8" stroke="#ffff00" stroke-opacity=".4" stroke-width="0.9"/>
<circle cx="143.4" cy="160.0" r="8" fill="#ffff00" fill-opacity=".8" stroke="#ffff00" stroke-opacity=".4" stroke-width="0.9"/>
<circle cx="178.0" cy="123.5" r="8" fill="#9a9a9a" fill-opacity=".8" stroke="#9a9a9a" stroke-opacity=".4" stroke-width="0.9"/>
<circle cx="192.0" cy="121.5" r="8" fill="#ff7e00" fill-opacity=".8" stroke="#ff7e00" stroke-opacity=".4" stroke-width="0.9"/>
<circle cx="195.0" cy="137.5" r="8" fill="#9a9a9a" fill-opacity=".8" stroke="#9a9a9a" stroke-opacity=".4" stroke-width="0.9"/>
<circle cx="198.0" cy="128.5" r="8" fill="#ffff00" fill-opacity=".8" stroke="#ffff00" stroke-opacity=".4" stroke-width="0.9"/>
<circle cx="209.5" cy="136.9" r="8" fill="#ffff00" fill-opacity=".8" stroke="#ffff00" stroke-opacity=".4" stroke-width="0.9"/>
<circle cx="202.0" cy="134.5" r="8" fill="#ff7e00" fill-opacity=".8" stroke="#ff7e00" stroke-opacity=".4" stroke-width="0.9"/>
<circle cx="183.0" cy="143.5" r="8" fill="#ff7e00" fill-opacity=".8" stroke="#ff7e00" stroke-opacity=".4" stroke-width="0.9"/>
<circle cx="172.0" cy="153.9" r="8" fill="#ffa800" fill-opacity=".8" stroke="#ffa800" stroke-opacity=".4" stroke-width="0.9"/>
<circle cx="182.5" cy="164.9" r="8" fill="#00e400" fill-opacity=".8" stroke="#00e400" stroke-opacity=".4" stroke-width="0.9"/>
<circle cx="172.3" cy="178.7" r="8" fill="#9a9a9a" fill-opacity=".8" stroke="#9a9a9a" stroke-opacity=".4" stroke-width="0.9"/>
<circle cx="197.0" cy="210.5" r="8" fill="#00e400" fill-opacity=".8" stroke="#00e400" stroke-opacity=".4" stroke-width="0.9"/>
<circle cx="214.9" cy="112.5" r="8" fill="#ff0000" fill-opacity=".8" stroke="#ff0000" stroke-opacity=".4" stroke-width="0.9"/>
<circle cx="229.3" cy="137.7" r="8" fill="#ff7e00" fill-opacity=".8" stroke="#ff7e00" stroke-opacity=".4" stroke-width="0.9"/>
<circle cx="233.0" cy="105.1" r="8" fill="#ff7e00" fill-opacity=".8" stroke="#ff7e00" stroke-opacity=".4" stroke-width="0.9"/>
<circle cx="232.0" cy="110.7" r="8" fill="#8f3f97" fill-opacity=".8" stroke="#8f3f97" stroke-opacity=".4" stroke-width="0.9"/>
<circle cx="241.0" cy="101.7" r="8" fill="#ff0000" fill-opacity=".8" stroke="#ff0000" stroke-opacity=".4" stroke-width="0.9"/>
<circle cx="245.4" cy="101.3" r="8" fill="#ff0000" fill-opacity=".8" stroke="#ff0000" stroke-opacity=".4" stroke-width="0.9"/>
<circle cx="232.0" cy="121.5" r="8" fill="#ffff00" fill-opacity=".8" stroke="#ffff00" stroke-opacity=".4" stroke-width="0.9"/>
<circle cx="239.2" cy="119.3" r="8" fill="#ff0000" fill-opacity=".8" stroke="#ff0000" stroke-opacity=".4" stroke-width="0.9"/>
<circle cx="241.9" cy="124.7" r="8" fill="#ff0000" fill-opacity=".8" stroke="#ff0000" stroke-opacity=".4" stroke-width="0.9"/>
<circle cx="246.0" cy="130.5" r="8" fill="#ff0000" fill-opacity=".8" stroke="#ff0000" stroke-opacity=".4" stroke-width="0.9"/>
<circle cx="259.0" cy="132.3" r="8" fill="#ff7e00" fill-opacity=".8" stroke="#ff7e00" stroke-opacity=".4" stroke-width="0.9"/>
<circle cx="263.5" cy="141.8" r="8" fill="#8f3f97" fill-opacity=".8" stroke="#8f3f97" stroke-opacity=".4" stroke-width="0.9"/>
<circle cx="268.4" cy="139.1" r="8" fill="#ff0000" fill-opacity=".8" stroke="#ff0000" stroke-opacity=".4" stroke-width="0.9"/>
<circle cx="239.2" cy="147.7" r="8" fill="#ff0000" fill-opacity=".8" stroke="#ff0000" stroke-opacity=".4" stroke-width="0.9"/>
<circle cx="248.2" cy="149.5" r="8" fill="#ff0000" fill-opacity=".8" stroke="#ff0000" stroke-opacity=".4" stroke-width="0.9"/>
<circle cx="251.4" cy="157.1" r="8" fill="#ff0000" fill-opacity=".8" stroke="#ff0000" stroke-opacity=".4" stroke-width="0.9"/>
<circle cx="250.0" cy="167.9" r="8" fill="#00e400" fill-opacity=".8" stroke="#00e400" stroke-opacity=".4" stroke-width="0.9"/>
<circle cx="277.6" cy="152.1" r="8" fill="#ffff00" fill-opacity=".8" stroke="#ffff00" stroke-opacity=".4" stroke-width="0.9"/>
<circle cx="293.2" cy="144.3" r="8" fill="#ff7e00" fill-opacity=".8" stroke="#ff7e00" stroke-opacity=".4" stroke-width="0.9"/>
<circle cx="305.6" cy="141.1" r="8" fill="#ff0000" fill-opacity=".8" stroke="#ff0000" stroke-opacity=".4" stroke-width="0.9"/>
<circle cx="294.6" cy="161.5" r="8" fill="#ff7e00" fill-opacity=".8" stroke="#ff7e00" stroke-opacity=".4" stroke-width="0.9"/>
<circle cx="288.0" cy="150.1" r="8" fill="#ff0000" fill-opacity=".8" stroke="#ff0000" stroke-opacity=".4" stroke-width="0.9"/>
<circle cx="295.0" cy="188.5" r="8" fill="#00e400" fill-opacity=".8" stroke="#00e400" stroke-opacity=".4" stroke-width="0.9"/>
<circle cx="295.4" cy="89.7" r="8" fill="#9a9a9a" fill-opacity=".8" stroke="#9a9a9a" stroke-opacity=".4" stroke-width="0.9"/>
<circle cx="310.0" cy="107.5" r="8" fill="#00e400" fill-opacity=".8" stroke="#00e400" stroke-opacity=".4" stroke-width="0.9"/>
<circle cx="322.0" cy="104.5" r="8" fill="#00e400" fill-opacity=".8" stroke="#00e400" stroke-opacity=".4" stroke-width="0.9"/>
<circle cx="319.0" cy="125.5" r="8" fill="#00e400" fill-opacity=".8" stroke="#00e400" stroke-opacity=".4" stroke-width="0.9"/>
<rect x="-9.7" y="168.6" width="12.6" height="6.4" rx="1.3" fill="#fff" fill-opacity=".92"/>
<text x="-3.4" y="174.2" fill="#111">N/A</text>
<rect x="-0.3" y="156.0" width="12.6" height="6.4" rx="1.3" fill="#fff" fill-opacity=".92"/>
<text x="6.0" y="161.7" fill="#111">N/A</text>
<rect x="91.7" y="160.2" width="8.7" height="6.4" rx="1.3" fill="#fff" fill-opacity=".92"/>
<text x="96.0" y="165.8" fill="#111">88</text>
<rect x="98.8" y="155.2" width="12.4" height="6.4" rx="1.3" fill="#fff" fill-opacity=".92"/>
<text x="105.0" y="160.8" fill="#111">175</text>
<rect x="105.7" y="167.2" width="12.6" height="6.4" rx="1.3" fill="#fff" fill-opacity=".92"/>
<text x="112.0" y="172.8" fill="#111">N/A</text>
<rect x="114.7" y="167.2" width="8.7" height="6.4" rx="1.3" fill="#fff" fill-opacity=".92"/>
<text x="119.0" y="172.8" fill="#111">74</text>
<rect x="119.1" y="110.8" width="8.7" height="6.4" rx="1.3" fill="#fff" fill-opacity=".92"/>
<text x="123.4" y="116.4" fill="#111">53</text>
<rect x="144.7" y="96.2" width="8.7" height="6.4" rx="1.3" fill="#fff" fill-opacity=".92"/>
<text x="149.0" y="101.8" fill="#111">15</text>
<rect x="149.7" y="99.2" width="8.7" height="6.4" rx="1.3" fill="#fff" fill-opacity=".92"/>
<text x="154.0" y="104.8" fill="#111">72</text>
<rect x="139.1" y="156.7" width="8.7" height="6.4" rx="1.3" fill="#fff" fill-opacity=".92"/>
<text x="143.4" y="162.3" fill="#111">91</text>
<rect x="171.7" y="120.2" width="12.6" height="6.4" rx="1.3" fill="#fff" fill-opacity=".92"/>
<text x="178.0" y="125.8" fill="#111">N/A</text>
<rect x="185.8" y="118.2" width="12.4" height="6.4" rx="1.3" fill="#fff" fill-opacity=".92"/>
<text x="192.0" y="123.8" fill="#111">116</text>
<rect x="188.7" y="134.2" width="12.6" height="6.4" rx="1.3" fill="#fff" fill-opacity=".92"/>
<text x="195.0" y="139.8" fill="#111">N/A</text>
<rect x="193.7" y="125.2" width="8.7" height="6.4" rx="1.3" fill="#fff" fill-opacity=".92"/>
<text x="198.0" y="130.8" fill="#111">60</text>
<rect x="205.2" y="133.6" width="8.7" height="6.4" rx="1.3" fill="#fff" fill-opacity=".92"/>
<text x="209.5" y="139.2" fill="#111">52</text>
<rect x="195.8" y="131.2" width="12.4" height="6.4" rx="1.3" fill="#fff" fill-opacity=".92"/>
<text x="202.0" y="136.8" fill="#111">103</text>
<rect x="176.8" y="140.2" width="12.4" height="6.4" rx="1.3" fill="#fff" fill-opacity=".92"/>
<text x="183.0" y="145.8" fill="#111">130</text>
<rect x="167.7" y="150.6" width="8.7" height="6.4" rx="1.3" fill="#fff" fill-opacity=".92"/>
<text x="172.0" y="156.2" fill="#111">98</text>
<rect x="178.2" y="161.6" width="8.7" height="6.4" rx="1.3" fill="#fff" fill-opacity=".92"/>
<text x="182.5" y="167.2" fill="#111">41</text>
<rect x="166.0" y="175.4" width="12.6" height="6.4" rx="1.3" fill="#fff" fill-opacity=".92"/>
<text x="172.3" y="181.0" fill="#111">N/A</text>
<rect x="192.7" y="207.2" width="8.7" height="6.4" rx="1.3" fill="#fff" fill-opacity=".92"/>
<text x="197.0" y="212.8" fill="#111">15</text>
<rect x="208.7" y="109.2" width="12.4" height="6.4" rx="1.3" fill="#fff" fill-opacity=".92"/>
<text x="214.9" y="114.8" fill="#111">152</text>
<rect x="223.1" y="134.4" width="12.4" height="6.4" rx="1.3" fill="#fff" fill-opacity=".92"/>
<text x="229.3" y="140.0" fill="#111">113</text>
<rect x="226.8" y="101.8" width="12.4" height="6.4" rx="1.3" fill="#fff" fill-opacity=".92"/>
<text x="233.0" y="107.4" fill="#111">134</text>
<rect x="225.8" y="107.4" width="12.4" height="6.4" rx="1.3" fill="#fff" fill-opacity=".92"/>
<text x="232.0" y="113.0" fill="#111">200</text>
<rect x="234.8" y="98.4" width="12.4" height="6.4" rx="1.3" fill="#fff" fill-opacity=".92"/>
<text x="241.0" y="104.0" fill="#111">165</text>
<rect x="239.2" y="98.0" width="12.4" height="6.4" rx="1.3" fill="#fff" fill-opacity=".92"/>
<text x="245.4" y="103.7" fill="#111">155</text>
<rect x="233.0" y="116.0" width="12.4" height="6.4" rx="1.3" fill="#fff" fill-opacity=".92"/>
<text x="239.2" y="121.7" fill="#111">175</text>
<rect x="235.7" y="121.4" width="12.4" height="6.4" rx="1.3" fill="#fff" fill-opacity=".92"/>
<text x="241.9" y="127.0" fill="#111">176</text>
<rect x="239.8" y="127.2" width="12.4" height="6.4" rx="1.3" fill="#fff" fill-opacity=".92"/>
<text x="246.0" y="132.8" fill="#111">162</text>
<rect x="252.8" y="129.0" width="12.4" height="6.4" rx="1.3" fill="#fff" fill-opacity=".92"/>
<text x="259.0" y="134.7" fill="#111">103</text>
<rect x="257.3" y="138.5" width="12.4" height="6.4" rx="1.3" fill="#fff" fill-opacity=".92"/>
<text x="263.5" y="144.2" fill="#111">227</text>
<rect x="262.2" y="135.8" width="12.4" height="6.4" rx="1.3" fill="#fff" fill-opacity=".92"/>
<text x="268.4" y="141.4" fill="#111">155</text>
<rect x="233.0" y="144.4" width="12.4" height="6.4" rx="1.3" fill="#fff" fill-opacity=".92"/>
<text x="239.2" y="150.0" fill="#111">154</text>
<rect x="242.0" y="146.2" width="12.4" height="6.4" rx="1.3" fill="#fff" fill-opacity=".92"/>
<text x="248.2" y="151.8" fill="#111">168</text>
<rect x="245.2" y="153.8" width="12.4" height="6.4" rx="1.3" fill="#fff" fill-opacity=".92"/>
<text x="251.4" y="159.4" fill="#111">153</text>
<rect x="245.7" y="164.6" width="8.7" height="6.4" rx="1.3" fill="#fff" fill-opacity=".92"/>
<text x="250.0" y="170.2" fill="#111">44</text>
<rect x="273.2" y="148.8" width="8.7" height="6.4" rx="1.3" fill="#fff" fill-opacity=".92"/>
<text x="277.6" y="154.4" fill="#111">95</text>
<rect x="287.0" y="141.0" width="12.4" height="6.4" rx="1.3" fill="#fff" fill-opacity=".92"/>
<text x="293.2" y="146.7" fill="#111">127</text>
<rect x="299.4" y="137.8" width="12.4" height="6.4" rx="1.3" fill="#fff" fill-opacity=".92"/>
<text x="305.6" y="143.4" fill="#111">169</text>
<rect x="288.4" y="158.2" width="12.4" height="6.4" rx="1.3" fill="#fff" fill-opacity=".92"/>
<text x="294.6" y="163.8" fill="#111">101</text>
<rect x="281.8" y="146.8" width="12.4" height="6.4" rx="1.3" fill="#fff" fill-opacity=".92"/>
<text x="288.0" y="152.4" fill="#111">162</text>
<rect x="290.6" y="185.2" width="8.7" height="6.4" rx="1.3" fill="#fff" fill-opacity=".92"/>
<text x="295.0" y="190.8" fill="#111">40</text>
<rect x="289.1" y="86.4" width="12.6" height="6.4" rx="1.3" fill="#fff" fill-opacity=".92"/>
<text x="295.4" y="92.0" fill="#111">N/A</text>
<rect x="305.6" y="104.2" width="8.7" height="6.4" rx="1.3" fill="#fff" fill-opacity=".92"/>
<text x="310.0" y="109.8" fill="#111">37</text>
<rect x="317.6" y="101.2" width="8.7" height="6.4" rx="1.3" fill="#fff" fill-opacity=".92"/>
<text x="322.0" y="106.8" fill="#111">50</text>
<rect x="314.6" y="122.2" width="8.7" height="6.4" rx="1.3" fill="#fff" fill-opacity=".92"/>
<text x="319.0" y="127.8" fill="#111">17</text>
</g>
</svg>
<div class="abs" style="left:212.6px;top:10.2px;width:93.1px;height:77.5px;background:#fff;border-radius:6.6px;box-shadow:0 1px 5px rgba(0,0,0,.28)"></div>
<svg class="abs" style="left:234.7px;top:87.2px" width="12" height="8" viewBox="0 0 12 8"><polygon points="0.6,0 11.4,0 6,6.6" fill="#fff"/></svg>
<div class="abs" style="left:212.6px;top:20.0px;width:93.1px;text-align:center;font-size:8.05px;line-height:8.8px;color:#333;white-space:nowrap">Bishkek<br>2020-12-29 7:00 PM<br>(LT)</div>
<div class="abs" style="left:222.1px;top:45.5px;width:75px;height:33.6px;background:#004b87"></div>
<div class="abs" style="left:222.7px;top:61.5px;width:46.6px;height:16.8px;background:#fff"></div>
<div class="abs" style="left:269.9px;top:61.5px;width:26.6px;height:16.8px;background:#ff0000"></div>
<div class="abs" style="left:222.1px;top:45.5px;width:47.5px;font-size:8.05px;line-height:16px;text-align:center;white-space:nowrap;color:#fff;font-weight:700">Pollutant</div>
<div class="abs" style="left:269.6px;top:45.5px;width:27.5px;font-size:8.05px;line-height:16px;text-align:center;white-space:nowrap;color:#fff;font-weight:700">AQI</div>
<div class="abs" style="left:222.1px;top:62.0px;width:47.5px;font-size:8.05px;line-height:16px;text-align:center;white-space:nowrap;color:#333">PM2.5</div>
<div class="abs" style="left:269.6px;top:62.0px;width:27.5px;font-size:8.05px;line-height:16px;text-align:center;white-space:nowrap;color:#fff;font-weight:700">165</div>
</div>

<div class="abs blue bar" style="top:0.7px">Select a City</div>
<div class="abs sel" style="top:22.9px">Bishkek<span class="abs x">×</span><span class="abs c"></span></div>
<div class="abs blue bar" style="top:55.3px">Select a Parameter</div>
<div class="abs sel" style="top:77.5px">PM2.5<span class="abs x">×</span><span class="abs c"></span></div>
<div id="rss" class="abs"><b class="abs">Bishkek</b>
<svg class="abs" style="left:166px;top:15.3px" width="20" height="20" viewBox="0 0 20 20"><rect width="20" height="20" fill="#f2b23c"/><circle cx="4.3" cy="15.6" r="2" fill="#fff"/><path d="M3 8.5a8.1 8.1 0 0 1 8.1 8.1M3 3.5a13.1 13.1 0 0 1 13.1 13.1" fill="none" stroke="#fff" stroke-width="2.3" stroke-linecap="round"/></svg>
</div>
<div id="note" class="abs">Note: Values above 500 are considered Beyond the AQI. Follow<br>recommendations for the Hazardous category. Additional information<br>on reducing exposure to extremely high levels of particle pollution is<br>available <a>here</a>.</div>

<div class="abs tab" style="left:20px;width:62px;background:#fff;border-color:#c8c8c8;border-top:1.5px solid #004b87;color:#555">AQI</div>
<div class="abs tab" style="left:84px;width:96px">Concentration</div>
<div class="abs tab" style="left:182.5px;width:78.5px">Historical</div>
<div id="tabline" class="abs"></div>
<div id="learn" class="abs">Learn more about how the Air Quality Index [AQI] is calculated from the EPA <a>here</a>.</div>

<div id="chart" class="abs">
<svg class="abs" style="left:0;top:0" width="463" height="182" viewBox="0 0 463 182" font-family="Liberation Sans,Arial,sans-serif">
<line x1="43.4" x2="456.6" y1="35" y2="35" stroke="#e6e6e6" stroke-width="0.7"/>
<line x1="43.4" x2="456.6" y1="56" y2="56" stroke="#e6e6e6" stroke-width="0.7"/>
<line x1="43.4" x2="456.6" y1="77" y2="77" stroke="#e6e6e6" stroke-width="0.7"/>
<line x1="43.4" x2="456.6" y1="98" y2="98" stroke="#e6e6e6" stroke-width="0.7"/>
<line x1="43.4" x2="456.6" y1="119.19999999999999" y2="119.19999999999999" stroke="#e6e6e6" stroke-width="0.7"/>
<rect x="48.16" y="103.40" width="8.4" height="37.00" fill="#ff0000" stroke="#40200c" stroke-opacity=".9" stroke-width="0.8"/>
<rect x="65.39" y="105.40" width="8.4" height="35.00" fill="#ff0000" stroke="#40200c" stroke-opacity=".9" stroke-width="0.8"/>
<rect x="82.61" y="106.40" width="8.4" height="34.00" fill="#ff0000" stroke="#40200c" stroke-opacity=".9" stroke-width="0.8"/>
<rect x="99.84" y="106.40" width="8.4" height="34.00" fill="#ff0000" stroke="#40200c" stroke-opacity=".9" stroke-width="0.8"/>
<rect x="117.06" y="106.80" width="8.4" height="33.60" fill="#ff0000" stroke="#40200c" stroke-opacity=".9" stroke-width="0.8"/>
<rect x="134.29" y="107.40" width="8.4" height="33.00" fill="#ff0000" stroke="#40200c" stroke-opacity=".9" stroke-width="0.8"/>
<rect x="151.51" y="108.40" width="8.4" height="32.00" fill="#ff0000" stroke="#40200c" stroke-opacity=".9" stroke-width="0.8"/>
<rect x="168.74" y="108.80" width="8.4" height="31.60" fill="#ff0000" stroke="#40200c" stroke-opacity=".9" stroke-width="0.8"/>
<rect x="185.96" y="109.60" width="8.4" height="30.80" fill="#ff7e00" stroke="#40200c" stroke-opacity=".9" stroke-width="0.8"/>
<rect x="203.19" y="111.60" width="8.4" height="28.80" fill="#ff7e00" stroke="#40200c" stroke-opacity=".9" stroke-width="0.8"/>
<rect x="220.41" y="110.80" width="8.4" height="29.60" fill="#ff7e00" stroke="#40200c" stroke-opacity=".9" stroke-width="0.8"/>
<rect x="237.64" y="112.00" width="8.4" height="28.40" fill="#ff7e00" stroke="#40200c" stroke-opacity=".9" stroke-width="0.8"/>
<rect x="254.86" y="118.40" width="8.4" height="22.00" fill="#ff7e00" stroke="#40200c" stroke-opacity=".9" stroke-width="0.8"/>
<rect x="272.09" y="124.80" width="8.4" height="15.60" fill="#ffff00" stroke="#40200c" stroke-opacity=".9" stroke-width="0.8"/>
<rect x="289.31" y="122.40" width="8.4" height="18.00" fill="#ffff00" stroke="#40200c" stroke-opacity=".9" stroke-width="0.8"/>
<rect x="306.54" y="120.40" width="8.4" height="20.00" fill="#ffff00" stroke="#40200c" stroke-opacity=".9" stroke-width="0.8"/>
<rect x="323.76" y="121.00" width="8.4" height="19.40" fill="#ffff00" stroke="#40200c" stroke-opacity=".9" stroke-width="0.8"/>
<rect x="340.99" y="120.00" width="8.4" height="20.40" fill="#ffff00" stroke="#40200c" stroke-opacity=".9" stroke-width="0.8"/>
<rect x="358.21" y="118.40" width="8.4" height="22.00" fill="#ff7e00" stroke="#40200c" stroke-opacity=".9" stroke-width="0.8"/>
<rect x="375.44" y="118.40" width="8.4" height="22.00" fill="#ff7e00" stroke="#40200c" stroke-opacity=".9" stroke-width="0.8"/>
<rect x="392.66" y="120.00" width="8.4" height="20.40" fill="#ffff00" stroke="#40200c" stroke-opacity=".9" stroke-width="0.8"/>
<rect x="409.89" y="117.60" width="8.4" height="22.80" fill="#ff7e00" stroke="#40200c" stroke-opacity=".9" stroke-width="0.8"/>
<rect x="427.11" y="110.80" width="8.4" height="29.60" fill="#ff7e00" stroke="#40200c" stroke-opacity=".9" stroke-width="0.8"/>
<rect x="444.34" y="106.40" width="8.4" height="34.00" fill="#ff0000" stroke="#40200c" stroke-opacity=".9" stroke-width="0.8"/>
<line x1="43.75" x2="456.6" y1="140.39999999999998" y2="140.39999999999998" stroke="#ccd6eb" stroke-width="0.8"/>
<line x1="43.75" x2="43.75" y1="140.39999999999998" y2="145.89999999999998" stroke="#ccd6eb" stroke-width="0.7"/>
<line x1="60.97" x2="60.97" y1="140.39999999999998" y2="145.89999999999998" stroke="#ccd6eb" stroke-width="0.7"/>
<line x1="78.20" x2="78.20" y1="140.39999999999998" y2="145.89999999999998" stroke="#ccd6eb" stroke-width="0.7"/>
<line x1="95.43" x2="95.43" y1="140.39999999999998" y2="145.89999999999998" stroke="#ccd6eb" stroke-width="0.7"/>
<line x1="112.65" x2="112.65" y1="140.39999999999998" y2="145.89999999999998" stroke="#ccd6eb" stroke-width="0.7"/>
<line x1="129.88" x2="129.88" y1="140.39999999999998" y2="145.89999999999998" stroke="#ccd6eb" stroke-width="0.7"/>
<line x1="147.10" x2="147.10" y1="140.39999999999998" y2="145.89999999999998" stroke="#ccd6eb" stroke-width="0.7"/>
<line x1="164.33" x2="164.33" y1="140.39999999999998" y2="145.89999999999998" stroke="#ccd6eb" stroke-width="0.7"/>
<line x1="181.55" x2="181.55" y1="140.39999999999998" y2="145.89999999999998" stroke="#ccd6eb" stroke-width="0.7"/>
<line x1="198.78" x2="198.78" y1="140.39999999999998" y2="145.89999999999998" stroke="#ccd6eb" stroke-width="0.7"/>
<line x1="216.00" x2="216.00" y1="140.39999999999998" y2="145.89999999999998" stroke="#ccd6eb" stroke-width="0.7"/>
<line x1="233.23" x2="233.23" y1="140.39999999999998" y2="145.89999999999998" stroke="#ccd6eb" stroke-width="0.7"/>
<line x1="250.45" x2="250.45" y1="140.39999999999998" y2="145.89999999999998" stroke="#ccd6eb" stroke-width="0.7"/>
<line x1="267.68" x2="267.68" y1="140.39999999999998" y2="145.89999999999998" stroke="#ccd6eb" stroke-width="0.7"/>
<line x1="284.90" x2="284.90" y1="140.39999999999998" y2="145.89999999999998" stroke="#ccd6eb" stroke-width="0.7"/>
<line x1="302.12" x2="302.12" y1="140.39999999999998" y2="145.89999999999998" stroke="#ccd6eb" stroke-width="0.7"/>
<line x1="319.35" x2="319.35" y1="140.39999999999998" y2="145.89999999999998" stroke="#ccd6eb" stroke-width="0.7"/>
<line x1="336.58" x2="336.58" y1="140.39999999999998" y2="145.89999999999998" stroke="#ccd6eb" stroke-width="0.7"/>
<line x1="353.80" x2="353.80" y1="140.39999999999998" y2="145.89999999999998" stroke="#ccd6eb" stroke-width="0.7"/>
<line x1="371.03" x2="371.03" y1="140.39999999999998" y2="145.89999999999998" stroke="#ccd6eb" stroke-width="0.7"/>
<line x1="388.25" x2="388.25" y1="140.39999999999998" y2="145.89999999999998" stroke="#ccd6eb" stroke-width="0.7"/>
<line x1="405.48" x2="405.48" y1="140.39999999999998" y2="145.89999999999998" stroke="#ccd6eb" stroke-width="0.7"/>
<line x1="422.70" x2="422.70" y1="140.39999999999998" y2="145.89999999999998" stroke="#ccd6eb" stroke-width="0.7"/>
<line x1="439.93" x2="439.93" y1="140.39999999999998" y2="145.89999999999998" stroke="#ccd6eb" stroke-width="0.7"/>
<line x1="457.15" x2="457.15" y1="140.39999999999998" y2="145.89999999999998" stroke="#ccd6eb" stroke-width="0.7"/>
<g font-size="6.9" fill="#1a1a1a" text-anchor="end" stroke="#1a1a1a" stroke-width=".15">
<text x="34.9" y="36.7">500</text>
<text x="34.9" y="57.7">400</text>
<text x="34.9" y="78.7">300</text>
<text x="34.9" y="99.7">200</text>
<text x="34.9" y="120.9">100</text>
<text x="34.9" y="142.1">0</text>
</g>
<text transform="translate(16.6,85.39999999999998) rotate(-90)" font-size="7.3" fill="#1a1a1a" stroke="#1a1a1a" stroke-width=".15" text-anchor="middle">AQI</text>
<text x="231.5" y="13.699999999999989" font-family="DejaVu Sans,Verdana,sans-serif" font-size="10.25" fill="#333" text-anchor="middle">Bishkek - PM2.5</text>
<g font-size="6.7" fill="#666" text-anchor="end">
<text transform="translate(54.56,149.60000000000002) rotate(-45)">8 PM</text>
<text transform="translate(71.79,149.60000000000002) rotate(-45)">9 PM</text>
<text transform="translate(89.01,149.60000000000002) rotate(-45)">10 PM</text>
<text transform="translate(106.24,149.60000000000002) rotate(-45)">11 PM</text>
<text transform="translate(123.46,149.60000000000002) rotate(-45)">Dec 29, 2020 12 AM</text>
<text transform="translate(140.69,149.60000000000002) rotate(-45)">1 AM</text>
<text transform="translate(157.91,149.60000000000002) rotate(-45)">2 AM</text>
<text transform="translate(175.14,149.60000000000002) rotate(-45)">3 AM</text>
<text transform="translate(192.36,149.60000000000002) rotate(-45)">4 AM</text>
<text transform="translate(209.59,149.60000000000002) rotate(-45)">5 AM</text>
<text transform="translate(226.81,149.60000000000002) rotate(-45)">6 AM</text>
<text transform="translate(244.04,149.60000000000002) rotate(-45)">7 AM</text>
<text transform="translate(261.26,149.60000000000002) rotate(-45)">8 AM</text>
<text transform="translate(278.49,149.60000000000002) rotate(-45)">9 AM</text>
<text transform="translate(295.71,149.60000000000002) rotate(-45)">10 AM</text>
<text transform="translate(312.94,149.60000000000002) rotate(-45)">11 AM</text>
<text transform="translate(330.16,149.60000000000002) rotate(-45)">12 PM</text>
<text transform="translate(347.39,149.60000000000002) rotate(-45)">1 PM</text>
<text transform="translate(364.61,149.60000000000002) rotate(-45)">2 PM</text>
<text transform="translate(381.84,149.60000000000002) rotate(-45)">3 PM</text>
<text transform="translate(399.06,149.60000000000002) rotate(-45)">4 PM</text>
<text transform="translate(416.29,149.60000000000002) rotate(-45)">5 PM</text>
<text transform="translate(433.51,149.60000000000002) rotate(-45)">6 PM</text>
<text transform="translate(450.74,149.60000000000002) rotate(-45)">7 PM</text>
</g>
</svg>
</div>

<div id="cc" class="abs">
<div class="abs blue" style="left:0;top:0;width:100%;height:42px"></div>
<div class="abs" style="left:0;top:42px;width:100%;height:67px;background:#ff0000"></div>
<div class="abs c" style="top:3px;font-size:8.6px;line-height:11px;color:#fff">Current Conditions</div>
<div class="abs c" style="top:14.8px;font-size:6.9px;line-height:11px;color:#fff">observed at</div>
<div class="abs c" style="top:27px;font-size:8.6px;line-height:11px;color:#fff">Dec 29, 2020 7:00 PM (LT)</div>
<div class="abs c" style="top:51px;font-size:11.5px;line-height:16.5px;color:#fff">165 AQI<br>Unhealthy<br>PM2.5</div>
<div class="abs c" style="top:112.3px;font-size:6.9px;line-height:11px;color:#333">Health Message</div>
<div class="abs" style="left:3px;top:126.5px;font-size:6.9px;line-height:12px;color:#555;white-space:nowrap">Everyone may begin to experience health<br>effects when AQI values are between 151<br>and 200. Members of sensitive groups may<br>experience more serious health effects.</div>
</div>
</body>
</html>
